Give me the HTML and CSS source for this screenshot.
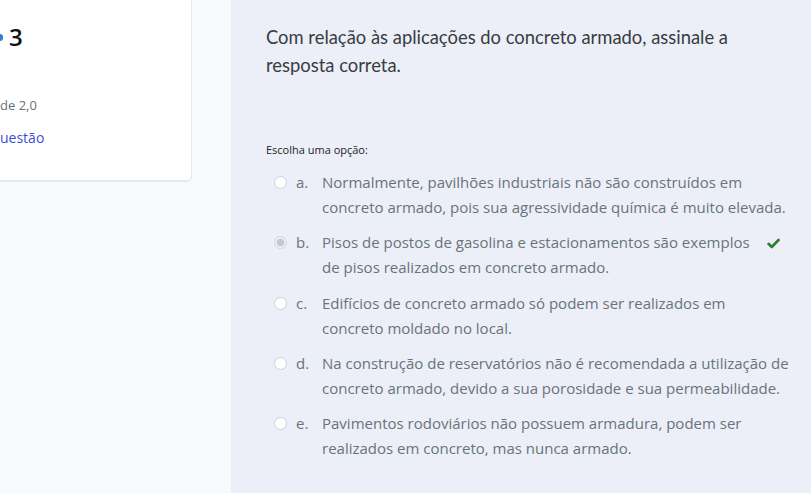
FILE: index.html
```html
<!DOCTYPE html>
<html lang="pt">
<head>
<meta charset="utf-8">
<link rel="stylesheet" href="styles.css">
</head>
<body>
<div class="page">
  <aside class="side">
    <div class="card">
      <h3 class="qno"><span class="dot"></span>3</h3>
      <div class="grade">de 2,0</div>
      <a class="flag" href="#">uestão</a>
    </div>
  </aside>
  <main class="formulation">
    <p class="qtext">Com relação às aplicações do concreto armado, assinale a resposta correta.</p>
    <div class="prompt">Escolha uma opção:</div>
    <div class="answers">
      <div class="opt"><span class="radio"></span><span class="letter">a.</span><span class="txt">Normalmente, pavilhões industriais não são construídos em<br>concreto armado, pois sua agressividade química é muito elevada.</span></div>
      <div class="opt"><span class="radio checked"></span><span class="letter">b.</span><span class="txt">Pisos de postos de gasolina e estacionamentos são exemplos <svg class="tick" width="13" height="11" viewBox="0 0 13 11"><path d="M1.5 5.8 L4.8 9 L11.5 2" fill="none" stroke="#2f7d32" stroke-width="2.6" stroke-linecap="round" stroke-linejoin="round"/></svg><br>de pisos realizados em concreto armado.</span></div>
      <div class="opt"><span class="radio"></span><span class="letter">c.</span><span class="txt">Edifícios de concreto armado só podem ser realizados em<br>concreto moldado no local.</span></div>
      <div class="opt"><span class="radio"></span><span class="letter">d.</span><span class="txt">Na construção de reservatórios não é recomendada a utilização de concreto armado, devido a sua porosidade e sua permeabilidade.</span></div>
      <div class="opt"><span class="radio"></span><span class="letter">e.</span><span class="txt">Pavimentos rodoviários não possuem armadura, podem ser realizados em concreto, mas nunca armado.</span></div>
    </div>
  </main>
</div>
</body>
</html>
```
FILE: styles.css
```css
html, body {
  margin: 0;
  padding: 0;
}
body {
  font-family: "Open Sans", "Noto Sans", sans-serif;
  background: #f8f9fb;
  width: 811px;
  height: 493px;
  overflow: hidden;
}
.page {
  display: flex;
  height: 493px;
}
.side {
  width: 231px;
  flex: none;
  background: #f8f9fb;
}
.card {
  width: 192px;
  height: 182px;
  box-sizing: border-box;
  background: #fff;
  border-right: 1px solid #e3e6ee;
  border-bottom: 2px solid #e6e9f1;
  border-bottom-right-radius: 5px;
  padding-top: 21px;
}
.qno {
  margin: 0;
  font-weight: 600;
  font-size: 24px;
  line-height: 32px;
  color: #111;
  display: flex;
  align-items: center;
  gap: 6px;
}
.dot {
  width: 3px;
  height: 7px;
  background: #2f7fd6;
  border-radius: 0 4px 4px 0;
}
.grade {
  margin-top: 42px;
  font-size: 13px;
  line-height: 20px;
  color: #6a737b;
}
.flag {
  display: block;
  margin-top: 13px;
  font-size: 14px;
  line-height: 20px;
  color: #3d50d6;
  text-decoration: none;
}
.formulation {
  flex: 1;
  background: #eceff7;
  padding: 23px 0 0 35px;
}
.qtext {
  margin: 0;
  width: 490px;
  font-family: "Lato", "Open Sans", sans-serif;
  font-size: 18.4px;
  line-height: 28px;
  color: #373c42;
}
.prompt {
  margin-top: 63px;
  font-size: 11px;
  line-height: 16px;
  color: #1d2125;
}
.answers {
  margin-top: 12px;
  display: flex;
  flex-direction: column;
  gap: 10.3px;
}
.opt {
  display: flex;
  align-items: flex-start;
  font-size: 15px;
  line-height: 25px;
  color: #6a737b;
}
.radio {
  flex: none;
  width: 13px;
  height: 13px;
  margin: 6px 9px 0 8px;
  border: 1px solid #cdd1d8;
  border-radius: 50%;
  background: #fff;
  box-sizing: border-box;
}
.radio.checked {
  background: radial-gradient(circle, #c5c9cf 0 3.5px, #eef0f3 4.2px);
  border-color: #d3d6dc;
}
.letter {
  flex: none;
  width: 26px;
}
.txt {
  width: 475px;
}
.tick {
  margin-left: 14px;
  vertical-align: -1px;
}
```
